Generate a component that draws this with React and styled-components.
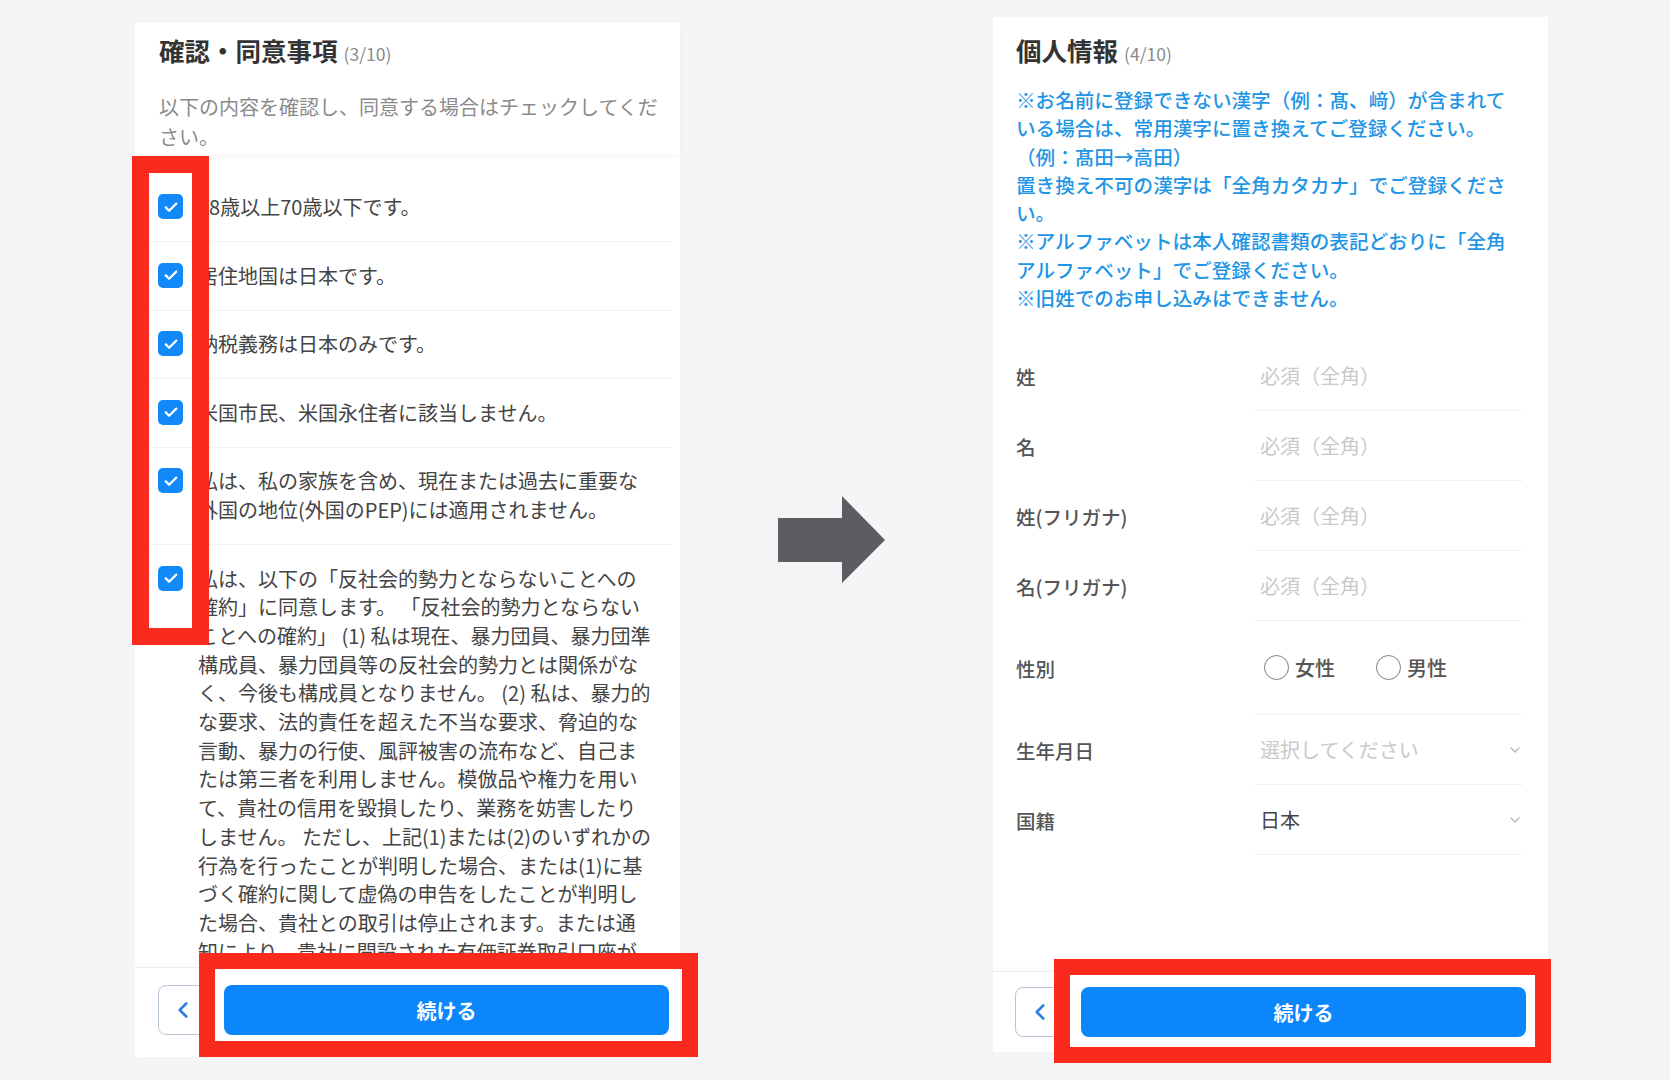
import styled, { createGlobalStyle } from "styled-components";
import { ChevronLeft, ChevronDown } from "lucide-react";

const GlobalStyle = createGlobalStyle`
  html, body {
    margin: 0;
    padding: 0;
    background: #f4f5f7;
  }
  body {
    font-family: "Noto Sans CJK JP", "Noto Sans", sans-serif;
  }
`;

const Page = styled.div`
  display: flex;
  align-items: flex-start;
  width: 1670px;
  height: 1080px;
  padding-left: 135px;
  box-sizing: border-box;
  overflow: hidden;
`;

const Panel = styled.section`
  position: relative;
  display: flex;
  flex-direction: column;
  flex: none;
  width: ${(p) => p.$w}px;
  height: ${(p) => p.$h}px;
  margin-top: ${(p) => p.$top}px;
  margin-left: ${(p) => p.$left || 0}px;
  background: #fff;
  border-radius: 2px;
`;

const Header = styled.header`
  position: relative;
  z-index: 1;
  padding: ${(p) => p.$pad};
  background: #fff;
  box-shadow: ${(p) => (p.$shadow ? "0 3px 5px rgba(0, 0, 0, 0.03)" : "none")};
`;

const Title = styled.h1`
  margin: 0;
  font-size: 25.5px;
  line-height: 34px;
  font-weight: 700;
  color: #333;
`;

const Step = styled.span`
  margin-left: 6px;
  font-size: 17.5px;
  font-weight: 400;
  color: #8a8a8a;
`;

const Lead = styled.p`
  margin: 21px 0 0;
  font-size: 20px;
  line-height: 30px;
  color: #8b8b8b;
  white-space: nowrap;
`;

const List = styled.ul`
  flex: 1;
  min-height: 0;
  overflow: hidden;
  margin: 0;
  padding: 20px 8px 0;
  list-style: none;
`;

const Item = styled.li`
  display: flex;
  align-items: flex-start;
  gap: 15px;
  padding: 19.4px 0 19.4px 15px;
  border-bottom: 1px solid #f3f4f6;
`;

const Check = styled.span`
  display: flex;
  align-items: center;
  justify-content: center;
  flex: none;
  width: 25px;
  height: 25px;
  margin-top: 1px;
  border-radius: 5px;
  background: #1189f8;
`;

const ItemText = styled.span`
  font-size: 20px;
  line-height: 28.7px;
  color: #444;
  white-space: nowrap;
`;

const Footer = styled.footer`
  position: relative;
  display: flex;
  gap: 16px;
  padding: ${(p) => p.$pad};
  background: #fff;
  border-top: 1px solid #eceef1;
  box-shadow: 0 -2px 6px rgba(0, 0, 0, 0.025);
`;

const BackButton = styled.button`
  display: flex;
  align-items: center;
  justify-content: center;
  flex: none;
  width: 50px;
  height: 50px;
  padding: 0;
  border: 1.5px solid #b9c6d8;
  border-radius: 8px;
  background: #fff;
  color: #2f7ee6;
`;

const NextButton = styled.button`
  flex: 1;
  height: 50px;
  border: none;
  border-radius: 8px;
  background: #0b86fc;
  color: #fff;
  font-family: inherit;
  font-size: 20px;
  font-weight: 700;
`;

const Highlight = styled.div`
  position: absolute;
  z-index: 5;
  left: ${(p) => p.$x}px;
  top: ${(p) => p.$y}px;
  width: ${(p) => p.$w}px;
  height: ${(p) => p.$h}px;
  box-sizing: border-box;
  border: ${(p) => p.$b}px solid #fb2a1e;
  pointer-events: none;
`;

const ArrowBox = styled.div`
  flex: none;
  margin: 496px 0 0 98px;
  width: 107px;
  height: 87px;
`;

const Notice = styled.p`
  margin: 15px 0 0;
  font-size: 19.6px;
  line-height: 28.3px;
  font-weight: 500;
  color: #1f95e6;
  white-space: nowrap;
`;

const Form = styled.div`
  flex: 1;
  margin-top: 29px;
  padding: 0 25px 0 23px;
`;

const Field = styled.div`
  display: flex;
  align-items: stretch;
  height: ${(p) => (p.$tall ? 94 : 70)}px;
`;

const Label = styled.label`
  display: flex;
  align-items: center;
  flex: none;
  width: 239px;
  font-size: 19.5px;
  font-weight: 500;
  color: #555;
`;

const Control = styled.div`
  display: flex;
  align-items: center;
  justify-content: space-between;
  flex: 1;
  padding: 0 0 0 5px;
  border-bottom: 1px solid #f1f2f4;
  font-size: 20px;
  color: ${(p) => (p.$muted ? "#c9c9c9" : "#444")};
`;

const RadioGroup = styled.div`
  display: flex;
  align-items: center;
  gap: 41px;
  margin-left: 4px;
`;

const RadioOption = styled.span`
  display: flex;
  align-items: center;
  gap: 6px;
  color: #555;
  font-weight: 500;
`;

const Radio = styled.span`
  width: 25px;
  height: 25px;
  box-sizing: border-box;
  border: 1.5px solid #7d7d7d;
  border-radius: 50%;
`;

const consents = [
  ["18歳以上70歳以下です。"],
  ["居住地国は日本です。"],
  ["納税義務は日本のみです。"],
  ["米国市民、米国永住者に該当しません。"],
  [
    "私は、私の家族を含め、現在または過去に重要な",
    "外国の地位(外国のPEP)には適用されません。",
  ],
  [
    "私は、以下の「反社会的勢力とならないことへの",
    "確約」に同意します。 「反社会的勢力とならない",
    "ことへの確約」 (1) 私は現在、暴力団員、暴力団準",
    "構成員、暴力団員等の反社会的勢力とは関係がな",
    "く、今後も構成員となりません。 (2) 私は、暴力的",
    "な要求、法的責任を超えた不当な要求、脅迫的な",
    "言動、暴力の行使、風評被害の流布など、自己ま",
    "たは第三者を利用しません。模倣品や権力を用い",
    "て、貴社の信用を毀損したり、業務を妨害したり",
    "しません。 ただし、上記(1)または(2)のいずれかの",
    "行為を行ったことが判明した場合、または(1)に基",
    "づく確約に関して虚偽の申告をしたことが判明し",
    "た場合、貴社との取引は停止されます。または通",
    "知により、貴社に開設された有価証券取引口座が",
    "解約された場合であっても、一切異議を申し立て",
    "ません。",
  ],
];

const notice = [
  "※お名前に登録できない漢字（例：髙、﨑）が含まれて",
  "いる場合は、常用漢字に置き換えてご登録ください。",
  "（例：髙田→高田）",
  "置き換え不可の漢字は「全角カタカナ」でご登録くださ",
  "い。",
  "※アルファベットは本人確認書類の表記どおりに「全角",
  "アルファベット」でご登録ください。",
  "※旧姓でのお申し込みはできません。",
];

const nameFields = ["姓", "名", "姓(フリガナ)", "名(フリガナ)"];

function Lines({ lines }) {
  return lines.map((line, i) => (
    <span key={i}>
      {line}
      {i < lines.length - 1 && <br />}
    </span>
  ));
}

function CheckMark() {
  return (
    <svg width="18" height="18" viewBox="0 0 24 24" fill="none">
      <path d="M5 12.5l4.5 4.5L19 7.5" stroke="#fff" strokeWidth="3" strokeLinecap="round" strokeLinejoin="round" />
    </svg>
  );
}

function Actions({ pad }) {
  return (
    <Footer $pad={pad}>
      <BackButton>
        <ChevronLeft size={26} strokeWidth={2.4} />
      </BackButton>
      <NextButton>続ける</NextButton>
    </Footer>
  );
}

function ConsentPanel() {
  return (
    <Panel $w={545} $h={1034} $top={23}>
      <Header $pad="10px 24px 2px" $shadow>
        <Title>
          確認・同意事項<Step>(3/10)</Step>
        </Title>
        <Lead>
          以下の内容を確認し、同意する場合はチェックしてくだ
          <br />
          さい。
        </Lead>
      </Header>
      <List>
        {consents.map((lines, i) => (
          <Item key={i}>
            <Check>
              <CheckMark />
            </Check>
            <ItemText>
              <Lines lines={lines} />
            </ItemText>
          </Item>
        ))}
      </List>
      <Actions pad="17px 11px 22px 23px" />
      <Highlight $x={-3} $y={133} $w={77} $h={489} $b={17} />
      <Highlight $x={64} $y={930} $w={499} $h={104} $b={16} />
    </Panel>
  );
}

function ProfilePanel() {
  return (
    <Panel $w={555} $h={1035} $top={17} $left={108}>
      <Header $pad="16px 23px 0">
        <Title>
          個人情報<Step>(4/10)</Step>
        </Title>
        <Notice>
          <Lines lines={notice} />
        </Notice>
      </Header>
      <Form>
        {nameFields.map((label) => (
          <Field key={label}>
            <Label>{label}</Label>
            <Control $muted>必須（全角）</Control>
          </Field>
        ))}
        <Field $tall>
          <Label>性別</Label>
          <Control>
            <RadioGroup>
              <RadioOption>
                <Radio />
                女性
              </RadioOption>
              <RadioOption>
                <Radio />
                男性
              </RadioOption>
            </RadioGroup>
          </Control>
        </Field>
        <Field>
          <Label>生年月日</Label>
          <Control $muted>
            選択してください
            <ChevronDown size={16} color="#b8b8b8" />
          </Control>
        </Field>
        <Field>
          <Label>国籍</Label>
          <Control>
            日本
            <ChevronDown size={16} color="#b8b8b8" />
          </Control>
        </Field>
      </Form>
      <Actions pad="15px 22px 15px 22px" />
      <Highlight $x={61} $y={942} $w={497} $h={104} $b={16} />
    </Panel>
  );
}

export default function App() {
  return (
    <>
      <GlobalStyle />
      <Page>
        <ConsentPanel />
        <ArrowBox>
          <svg width="107" height="87" viewBox="0 0 107 87">
            <polygon points="0,22 64,22 64,0 107,44 64,87 64,66 0,66" fill="#5b5d61" />
          </svg>
        </ArrowBox>
        <ProfilePanel />
      </Page>
    </>
  );
}
